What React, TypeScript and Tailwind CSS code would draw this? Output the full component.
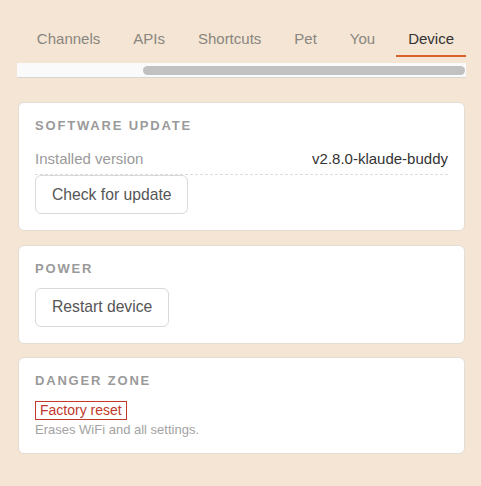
const tabs = ["Channels", "APIs", "Shortcuts", "Pet", "You", "Device"];

function Card({ title, children }: { title: string; children: React.ReactNode }) {
  return (
    <div className="mx-px rounded-md border border-[#e4ddd4] bg-white p-4">
      <h2 className="mb-3 text-[13px] font-bold uppercase leading-none tracking-[0.14em] text-[#9a9a9a]">{title}</h2>
      {children}
    </div>
  );
}

function Btn({ children }: { children: React.ReactNode }) {
  return (
    <button className="h-[39px] rounded-md border border-[#d9d9d9] bg-white px-4 text-[15.7px] leading-5 text-[#555]">
      {children}
    </button>
  );
}

export default function App() {
  return (
    <div className="min-h-[486px] bg-[#f4e5d4] pb-[17px] pl-[17px] pr-[15px] pt-[17px] font-['Liberation_Sans',Arial,sans-serif]">
      {/* tab strip, scrolled to its end */}
      <div className="overflow-hidden pb-1.5">
        <div className="flex justify-end gap-[9px]">
          {tabs.map((t) => (
            <div
              key={t}
              className={
                t === "Device"
                  ? "shrink-0 whitespace-nowrap border-b-2 border-[#d9622b] px-3 pb-1.5 pt-3 text-[15px] leading-5 text-[#333]"
                  : "shrink-0 whitespace-nowrap border-b-2 border-transparent px-3 pb-1.5 pt-3 text-[15px] leading-5 text-[#8a8580]"
              }
            >
              {t}
            </div>
          ))}
        </div>
      </div>
      {/* horizontal scrollbar */}
      <div className="flex h-[15px] items-center border-b border-[#d6d6d6] bg-[#fafafa]">
        <div className="ml-[126px] mr-px h-[9px] flex-1 rounded-full bg-[#c1c1c1]" />
      </div>

      <div className="mt-6 flex flex-col gap-[13.5px]">
        <Card title="Software update">
          <div className="flex justify-between border-b border-dashed border-[#dcdcdc] py-[5px] text-[15px] leading-5">
            <span className="text-[#9a9a9a]">Installed version</span>
            <span className="text-[#333]">v2.8.0-klaude-buddy</span>
          </div>
          <Btn>Check for update</Btn>
        </Card>

        <Card title="Power">
          <div className="pt-px">
            <Btn>Restart device</Btn>
          </div>
        </Card>

        <Card title="Danger zone">
          <div className="pt-0.5">
            <button className="block border border-[#c0392b] px-1 text-[14px] leading-[17px] text-[#c0392b]">Factory reset</button>
            <p className="mt-0.5 text-[13px] leading-[15px] text-[#a3a3a3]">Erases WiFi and all settings.</p>
          </div>
        </Card>
      </div>
    </div>
  );
}
